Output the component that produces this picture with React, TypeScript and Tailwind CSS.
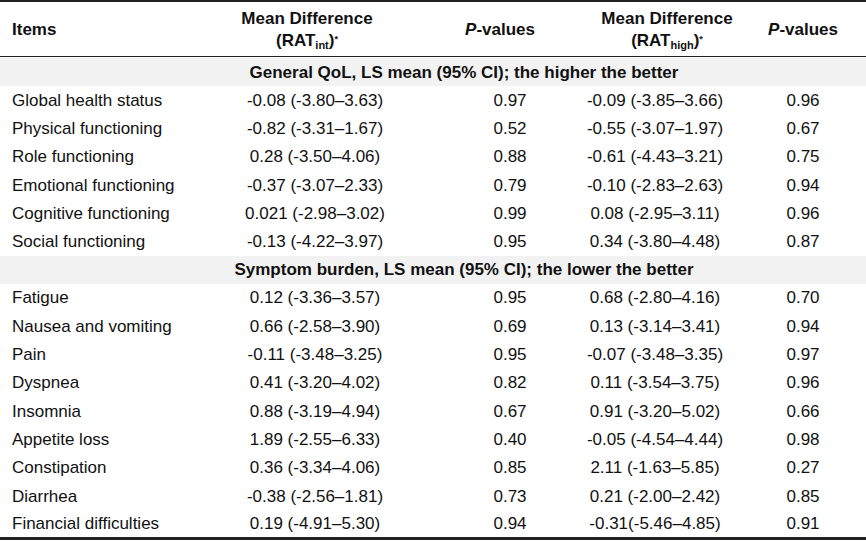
import React from "react";

type Row = { item: string; md1: string; p1: string; md2: string; p2: string };

const qol: Row[] = [
	{ item: "Global health status", md1: "-0.08 (-3.80–3.63)", p1: "0.97", md2: "-0.09 (-3.85–3.66)", p2: "0.96" },
	{ item: "Physical functioning", md1: "-0.82 (-3.31–1.67)", p1: "0.52", md2: "-0.55 (-3.07–1.97)", p2: "0.67" },
	{ item: "Role functioning", md1: "0.28 (-3.50–4.06)", p1: "0.88", md2: "-0.61 (-4.43–3.21)", p2: "0.75" },
	{ item: "Emotional functioning", md1: "-0.37 (-3.07–2.33)", p1: "0.79", md2: "-0.10 (-2.83–2.63)", p2: "0.94" },
	{ item: "Cognitive functioning", md1: "0.021 (-2.98–3.02)", p1: "0.99", md2: "0.08 (-2.95–3.11)", p2: "0.96" },
	{ item: "Social functioning", md1: "-0.13 (-4.22–3.97)", p1: "0.95", md2: "0.34 (-3.80–4.48)", p2: "0.87" },
];

const symptoms: Row[] = [
	{ item: "Fatigue", md1: "0.12 (-3.36–3.57)", p1: "0.95", md2: "0.68 (-2.80–4.16)", p2: "0.70" },
	{ item: "Nausea and vomiting", md1: "0.66 (-2.58–3.90)", p1: "0.69", md2: "0.13 (-3.14–3.41)", p2: "0.94" },
	{ item: "Pain", md1: "-0.11 (-3.48–3.25)", p1: "0.95", md2: "-0.07 (-3.48–3.35)", p2: "0.97" },
	{ item: "Dyspnea", md1: "0.41 (-3.20–4.02)", p1: "0.82", md2: "0.11 (-3.54–3.75)", p2: "0.96" },
	{ item: "Insomnia", md1: "0.88 (-3.19–4.94)", p1: "0.67", md2: "0.91 (-3.20–5.02)", p2: "0.66" },
	{ item: "Appetite loss", md1: "1.89 (-2.55–6.33)", p1: "0.40", md2: "-0.05 (-4.54–4.44)", p2: "0.98" },
	{ item: "Constipation", md1: "0.36 (-3.34–4.06)", p1: "0.85", md2: "2.11 (-1.63–5.85)", p2: "0.27" },
	{ item: "Diarrhea", md1: "-0.38 (-2.56–1.81)", p1: "0.73", md2: "0.21 (-2.00–2.42)", p2: "0.85" },
	{ item: "Financial difficulties", md1: "0.19 (-4.91–5.30)", p1: "0.94", md2: "-0.31(-5.46–4.85)", p2: "0.91" },
];

const DataRow = ({ r }: { r: Row }) => (
	<tr className="h-[28.3px]">
		<td className="pl-[12px] text-left">{r.item}</td>
		<td className="text-center">{r.md1}</td>
		<td className="pl-[10px] text-center">{r.p1}</td>
		<td className="pr-[10px] text-center">{r.md2}</td>
		<td className="text-center">{r.p2}</td>
	</tr>
);

const Section = ({ title }: { title: string }) => (
	<tr className="h-[28px] bg-[#f2f2f2]">
		<td colSpan={5} className="pl-[62px] text-center font-bold">
			{title}
		</td>
	</tr>
);

export default function App() {
	return (
		<div className="w-[866px] h-[541px] bg-white overflow-hidden text-[17px] leading-none text-[#111]" style={{ fontFamily: '"Liberation Sans", Arial, sans-serif' }}>
			<table className="w-[866px] table-fixed border-collapse">
				<colgroup>
					<col className="w-[200px]" />
					<col className="w-[230px]" />
					<col className="w-[150px]" />
					<col className="w-[160px]" />
					<col className="w-[126px]" />
				</colgroup>
				<thead>
					<tr className="h-[55px] border-t-[2px] border-b-[1.5px] border-t-[#222] border-b-[#222] font-bold">
						<th className="pl-[12px] pt-[2px] text-left">Items</th>
						<th className="pr-[16px] pt-[3px] text-center">
							<div className="leading-[22px]">Mean Difference</div>
							<div className="leading-[22px]">
								(RAT<sub className="text-[11px]">int</sub>)<sup className="text-[9px]">*</sup>
							</div>
						</th>
						<th className="pr-[10px] pt-[2px] text-center">
							<i>P</i>-values
						</th>
						<th className="pl-[14px] pt-[3px] text-center">
							<div className="leading-[22px]">Mean Difference</div>
							<div className="leading-[22px]">
								(RAT<sub className="text-[11px]">high</sub>)<sup className="text-[9px]">*</sup>
							</div>
						</th>
						<th className="pt-[2px] text-center">
							<i>P</i>-values
						</th>
					</tr>
				</thead>
				<tbody className="border-b-[3px] border-b-[#222]">
					<tr className="h-[2px]">
						<td colSpan={5}></td>
					</tr>
					<Section title="General QoL, LS mean (95% CI); the higher the better" />
					{qol.map((r) => (
						<DataRow key={r.item} r={r} />
					))}
					<Section title="Symptom burden, LS mean (95% CI); the lower the better" />
					{symptoms.map((r) => (
						<DataRow key={r.item} r={r} />
					))}
				</tbody>
			</table>
		</div>
	);
}
